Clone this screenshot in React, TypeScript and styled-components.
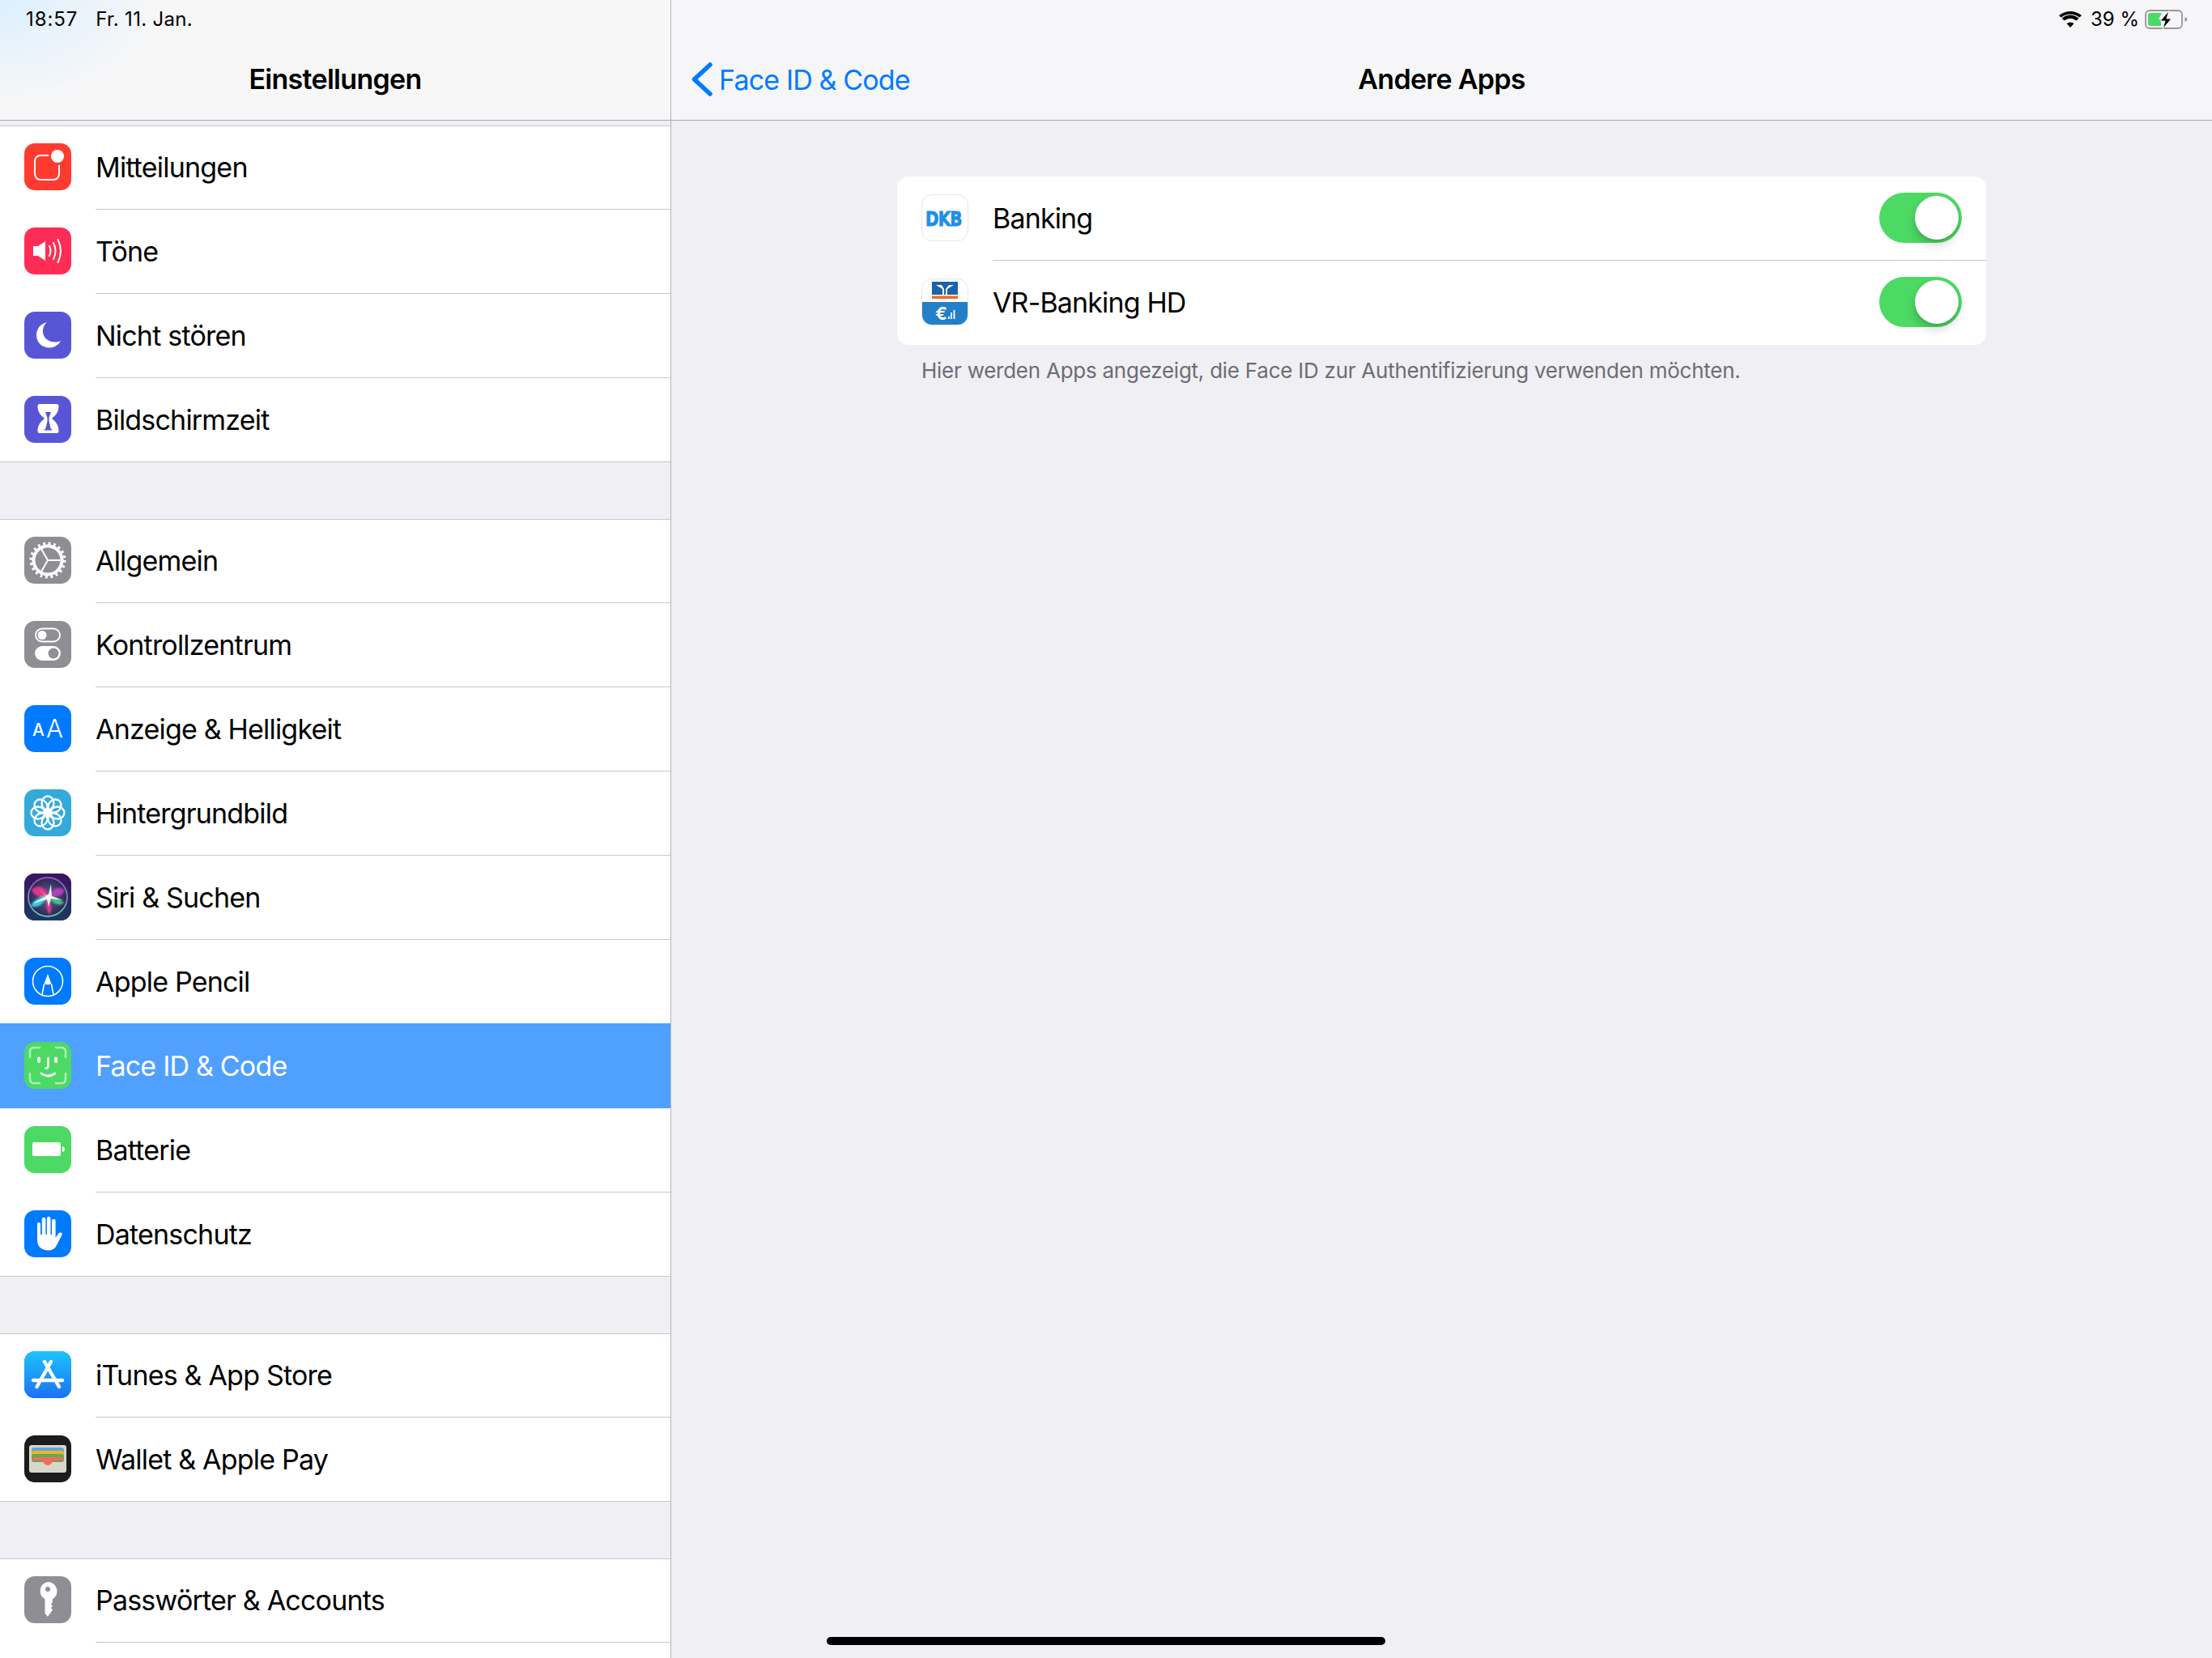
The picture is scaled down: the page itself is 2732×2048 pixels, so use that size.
import React from "react";
import styled, { createGlobalStyle } from "styled-components";

const GlobalStyle = createGlobalStyle`
  html, body { margin: 0; padding: 0; background: #efeff4; }
  body { font-family: Inter, "Liberation Sans", sans-serif; -webkit-font-smoothing: antialiased; }
  * { box-sizing: border-box; }
`;

const Screen = styled.div`
  position: relative;
  width: 2732px;
  height: 2048px;
  display: flex;
  overflow: hidden;
  background: #efeff4;
`;
const Sidebar = styled.aside`
  width: 829px;
  flex: none;
  height: 2048px;
  border-right: 1px solid #b4b4b8;
  overflow: hidden;
`;
const Detail = styled.main`
  flex: 1;
  min-width: 0;
  display: flex;
  flex-direction: column;
`;
const NavBar = styled.header<{ $glow?: boolean }>`
  position: relative;
  height: 149px;
  flex: none;
  border-bottom: 1px solid #a9a9ac;
  background: ${(p) =>
    p.$glow
      ? "radial-gradient(ellipse 200px 130px at 0 0, #dcefff 0%, rgba(247,247,248,0) 100%), #f7f7f8"
      : "#f6f6f8"};
`;
const StatusLeft = styled.div`
  position: absolute;
  left: 32px;
  top: 9px;
  display: flex;
  gap: 22px;
  font-size: 24px;
  line-height: 30px;
  letter-spacing: 0.3px;
  color: #000;
`;
const StatusTime = styled.span`
  letter-spacing: 0.9px;
`;
const NavTitle = styled.h1`
  margin: 0;
  position: absolute;
  left: 0;
  right: 0;
  top: 76px;
  text-align: center;
  font-size: 34px;
  line-height: 44px;
  font-weight: 600;
  letter-spacing: -0.7px;
  color: #000;
`;
const BackLink = styled.div`
  position: absolute;
  left: 25px;
  top: 77px;
  height: 42px;
  display: flex;
  align-items: center;
  gap: 8px;
  font-size: 34px;
  letter-spacing: -0.85px;
  color: #007aff;
`;
const StatusRight = styled.div`
  position: absolute;
  right: 30px;
  top: 9px;
  display: flex;
  align-items: center;
  gap: 7px;
  font-size: 24px;
  line-height: 30px;
`;
const WifiGlyph = styled.svg`
  margin-right: 4px;
`;
const SideList = styled.div`
  padding-top: 6px;
`;
const Group = styled.section`
  background: #fff;
  border-top: 1px solid #c8c7cc;
  margin-bottom: 70px;
`;
const Row = styled.div<{ $active?: boolean; $last?: boolean }>`
  height: ${(p) => (p.$active ? "105px" : "104px")};
  margin-top: ${(p) => (p.$active ? "-1px" : "0")};
  display: flex;
  align-items: center;
  padding: 0 0 ${(p) => (p.$active ? "1px" : "2px")} 30px;
  gap: 30px;
  position: relative;
  z-index: ${(p) => (p.$active ? 1 : 0)};
  background: ${(p) => (p.$active ? "#4fa0ff" : "transparent")};
  color: ${(p) => (p.$active ? "#fff" : "#000")};
  font-size: 34px;
  letter-spacing: -0.8px;
  &:first-child {
    height: 103px;
    padding-bottom: 3px;
  }
  &::after {
    content: "";
    display: ${(p) => (p.$active ? "none" : "block")};
    position: absolute;
    left: ${(p) => (p.$last ? "0" : "118px")};
    right: 0;
    bottom: 0;
    height: 1px;
    background: #c8c7cc;
  }
`;
const IconBox = styled.div<{ $bg: string }>`
  width: 58px;
  height: 58px;
  flex: none;
  border-radius: 13px;
  background: ${(p) => p.$bg};
  overflow: hidden;
  & > svg { display: block; width: 58px; height: 58px; }
`;
const Content = styled.div`
  width: 1345px;
  margin: 69px auto 0;
`;
const Card = styled.section`
  background: #fff;
  border-radius: 14px;
`;
const AppRow = styled.div<{ $last?: boolean }>`
  height: 104px;
  display: flex;
  align-items: center;
  padding: 0 30px 2px;
  gap: 30px;
  position: relative;
  font-size: 34px;
  letter-spacing: -0.85px;
  color: #000;
  &::after {
    content: "";
    display: ${(p) => (p.$last ? "none" : "block")};
    position: absolute;
    left: 118px;
    right: 0;
    bottom: 0;
    height: 1px;
    background: #c8c7cc;
  }
`;
const AppName = styled.span`
  flex: 1;
`;
const AppIcon = styled.div`
  width: 58px;
  height: 58px;
  flex: none;
  border-radius: 13px;
  border: 1px solid #e6e6e8;
  background: #fff;
  overflow: hidden;
  & > svg { display: block; width: 56px; height: 56px; }
`;
const Toggle = styled.div`
  width: 102px;
  height: 62px;
  border-radius: 31px;
  background: #4cd964;
  position: relative;
  flex: none;
  &::after {
    content: "";
    position: absolute;
    right: 4px;
    top: 4px;
    width: 54px;
    height: 54px;
    border-radius: 50%;
    background: #fff;
    box-shadow: -1px 7px 12px rgba(0, 0, 0, 0.16), 0 2px 3px rgba(0, 0, 0, 0.1);
  }
`;
const Footnote = styled.p`
  margin: 16px 0 0 30px;
  font-size: 26px;
  line-height: 32px;
  letter-spacing: -0.25px;
  color: #6d6d72;
`;
const HomeBar = styled.div`
  position: absolute;
  left: 1021px;
  bottom: 16px;
  width: 690px;
  height: 10px;
  border-radius: 5px;
  background: #000;
`;

const W = "#fff";
const icons: Record<string, React.ReactNode> = {
  bell: (
    <svg viewBox="0 0 58 58">
      <rect x="13" y="15" width="30" height="30" rx="7" fill="none" stroke={W} strokeWidth="2" />
      <circle cx="41" cy="16" r="11" fill="#ff3b30" />
      <circle cx="41" cy="16" r="8" fill={W} />
    </svg>
  ),
  sound: (
    <svg viewBox="0 0 58 58" fill="none" stroke={W} strokeWidth="2" strokeLinecap="round">
      <path d="M11 23h6l9-6v24l-9-6h-6z" fill={W} stroke="none" />
      <path d="M31 23q3 6 0 12" />
      <path d="M36 19q5 10 0 20" />
      <path d="M41.500 15q7 14 0 28" />
    </svg>
  ),
  moon: (
    <svg viewBox="0 0 58 58">
      <path d="M28 13C20 15 15 21 15 29c0 9 7 15.500 16 15.500 6 0 11-3 14-8.500-2 1-5 1.500-7 1.500-10 0-16-7-15-15 .5-4 2-7 5-9.500z" fill={W} />
    </svg>
  ),
  hourglass: (
    <svg viewBox="0 0 58 58">
      <path d="M19 10h21a2.500 2.500 0 0 1 2.500 2.500c0 7-3 11-8.500 15.500 5.500 4.500 8.500 8.500 8.500 15.500A2.500 2.500 0 0 1 40 46H19a2.500 2.500 0 0 1-2.500-2.500c0-7 3-11 8.500-15.500-5.500-4.500-8.500-8.500-8.500-15.500A2.500 2.500 0 0 1 19 10z" fill={W} />
      <path d="M26 20h7l-2.500 7v4l2 9 2.500 2.500H24l2.500-2.500 2-9v-4z" fill="#5856d6" />
    </svg>
  ),
  gear: (
    <svg viewBox="0 0 58 58" fill="none" stroke={W}>
      <circle cx="29" cy="29" r="17.500" strokeWidth="4" />
      <circle cx="29" cy="29" r="20.500" strokeWidth="4" strokeDasharray="2.800 3.640" />
      <path d="M29 29L21 15M29 29h16M29 29L21 43" strokeWidth="2" />
    </svg>
  ),
  control: (
    <svg viewBox="0 0 58 58">
      <rect x="14" y="9.500" width="30" height="16" rx="8" fill="none" stroke={W} strokeWidth="2" />
      <circle cx="22" cy="17.500" r="5.500" fill={W} />
      <rect x="13" y="31" width="32" height="18" rx="9" fill={W} />
      <circle cx="36" cy="40" r="6.500" fill="#8e8e93" />
    </svg>
  ),
  aa: (
    <svg viewBox="0 0 58 58" fill={W} fontFamily="Inter, sans-serif">
      <text x="10" y="37.500" fontSize="21" fontWeight="500">A</text>
      <text x="27" y="40" fontSize="31" fontWeight="300">A</text>
    </svg>
  ),
  flower: (
    <svg viewBox="0 0 58 58" fill="none" stroke={W} strokeWidth="2.300">
      {[0, 45, 90, 135, 180, 225, 270, 315].map((a) => (
        <ellipse key={a} cx="29" cy="17" rx="7.500" ry="8.500" transform={`rotate(${a} 29 29)`} />
      ))}
      <circle cx="29" cy="29" r="3.200" fill={W} stroke="none" />
    </svg>
  ),
  siri: (
    <svg viewBox="0 0 58 58">
      <defs>
        <linearGradient id="siriBg" x1="0" y1="0" x2="0" y2="1">
          <stop offset="0" stopColor="#3a1466" />
          <stop offset="1" stopColor="#1c3a5e" />
        </linearGradient>
        <linearGradient id="siriRing" x1="0" y1="0" x2="0" y2="1">
          <stop offset="0" stopColor="#a04bb0" />
          <stop offset="1" stopColor="#5fc7c0" />
        </linearGradient>
        <radialGradient id="siriDisc">
          <stop offset="0" stopColor="#6a5f98" />
          <stop offset="1" stopColor="#2a2750" />
        </radialGradient>
        <filter id="siriBlur" x="-20%" y="-20%" width="140%" height="140%">
          <feGaussianBlur stdDeviation="1" />
        </filter>
      </defs>
      <rect width="58" height="58" fill="url(#siriBg)" />
      <circle cx="29" cy="29" r="24" fill="url(#siriDisc)" stroke="url(#siriRing)" strokeWidth="1.800" />
      <g filter="url(#siriBlur)">
        <path d="M31 28C25 14 15 14 9 20c3 9 14 10 22 8z" fill="#e0358c" />
        <path d="M29 29c8-12 14-14 20-9 2 7-10 9-20 9z" fill="#c43fc4" opacity=".85" />
        <path d="M29 27C20 28 11 33 8 40c8 4 17-3 21-13z" fill="#3ad0de" />
        <path d="M29 28c8 1 15 4 20 8-5 6-16 0-20-8z" fill="#3fc886" />
        <path d="M29 29c-3 7-2 15 2 22 4-6 2-15-2-22z" fill="#e0408e" />
      </g>
      <path d="M29 29L33 13l1 15 14 5-15-2-3 10-2-9-18 5 17-9-9-9z" fill="#fff" opacity=".9" />
      <circle cx="30" cy="29" r="3" fill="#fff" />
    </svg>
  ),
  pencil: (
    <svg viewBox="0 0 58 58" fill="none">
      <circle cx="29" cy="29" r="18.500" stroke={W} strokeWidth="1.600" />
      <path d="M29 20l4.500 12.500q-4.500 1.500-9 0z" fill={W} />
      <path d="M24.500 32.500l-2.500 13M33.500 32.500l2.500 13" stroke={W} strokeWidth="1.600" />
    </svg>
  ),
  faceid: (
    <svg viewBox="0 0 58 58" fill="none" stroke={W} strokeWidth="2.600" strokeLinecap="round">
      <g opacity=".55">
        <path d="M7 19v-7a5 5 0 0 1 5-5h7M39 7h7a5 5 0 0 1 5 5v7M51 39v7a5 5 0 0 1-5 5h-7M19 51h-7a5 5 0 0 1-5-5v-7" />
      </g>
      <path d="M18 20.500v3.500M39 20.500v3.500" strokeWidth="4" />
      <path d="M29.500 20v9.500q0 3-3 3" />
      <path d="M21 39q8 6 17 0" strokeWidth="2.800" />
    </svg>
  ),
  battery: (
    <svg viewBox="0 0 58 58">
      <rect x="10" y="20" width="35" height="17" rx="2" fill={W} />
      <path d="M47 25q3 1 3 3.500t-3 3.500z" fill={W} />
    </svg>
  ),
  hand: (
    <svg viewBox="0 0 58 58">
      <path d="M16 17a2 2 0 0 1 4 0v13h1.800V11a2.300 2.300 0 0 1 4.600 0v19h1.500V10a2.300 2.300 0 0 1 4.600 0v20h1.500V13a2.300 2.300 0 0 1 4.600 0v21l3.400-5c1.800-2.500 5.800-1.500 4.500 1.500l-6.500 12.500c-2 4-5 6.500-10 6.500-9 0-14-5-14-13z" fill={W} />
    </svg>
  ),
  appstore: (
    <svg viewBox="0 0 58 58">
      <defs>
        <linearGradient id="asBg" x1="0" y1="0" x2="0" y2="1">
          <stop offset="0" stopColor="#1cc4fd" />
          <stop offset="1" stopColor="#1d70f2" />
        </linearGradient>
      </defs>
      <rect width="58" height="58" fill="url(#asBg)" />
      <g stroke={W} strokeWidth="4.400" strokeLinecap="round" fill="none">
        <path d="M33 13L15.500 44M25 13l18 31" />
        <path d="M11 36h36" />
      </g>
    </svg>
  ),
  wallet: (
    <svg viewBox="0 0 58 58">
      <rect x="6" y="12" width="46" height="34" rx="3" fill="#d9d7cc" />
      <rect x="9" y="15" width="40" height="12" rx="3" fill="#5aa9d6" />
      <rect x="9" y="19" width="40" height="10" rx="3" fill="#f4b02c" />
      <rect x="9" y="23" width="40" height="10" rx="3" fill="#57b04a" />
      <path d="M9 30a3 3 0 0 1 3-3h34a3 3 0 0 1 3 3v1H37l-5 5q-3 2-6 0l-5-5H9z" fill="#f26c5d" />
    </svg>
  ),
  key: (
    <svg viewBox="0 0 58 58">
      <path fillRule="evenodd" d="M29 7a11.500 11.500 0 0 1 6 21.300V32l-2 2.500 2 2.500-2 2 2 2.500L29 50l-3.500-4V28.300A11.500 11.500 0 0 1 29 7zm0 6a3 3 0 1 0 0 6 3 3 0 0 0 0-6z" fill={W} />
    </svg>
  ),
};

type Item = { label: string; icon: string; bg: string; active?: boolean };
const groups: Item[][] = [
  [
    { label: "Mitteilungen", icon: "bell", bg: "#ff3b30" },
    { label: "Töne", icon: "sound", bg: "#ff2d55" },
    { label: "Nicht stören", icon: "moon", bg: "#5856d6" },
    { label: "Bildschirmzeit", icon: "hourglass", bg: "#5856d6" },
  ],
  [
    { label: "Allgemein", icon: "gear", bg: "#8e8e93" },
    { label: "Kontrollzentrum", icon: "control", bg: "#8e8e93" },
    { label: "Anzeige & Helligkeit", icon: "aa", bg: "#007aff" },
    { label: "Hintergrundbild", icon: "flower", bg: "#34aadc" },
    { label: "Siri & Suchen", icon: "siri", bg: "#1d1d3a" },
    { label: "Apple Pencil", icon: "pencil", bg: "#007aff" },
    { label: "Face ID & Code", icon: "faceid", bg: "#4cd964", active: true },
    { label: "Batterie", icon: "battery", bg: "#4cd964" },
    { label: "Datenschutz", icon: "hand", bg: "#007aff" },
  ],
  [
    { label: "iTunes & App Store", icon: "appstore", bg: "#1c9cf8" },
    { label: "Wallet & Apple Pay", icon: "wallet", bg: "#1c1c1e" },
  ],
  [
    { label: "Passwörter & Accounts", icon: "key", bg: "#8e8e93" },
    { label: "", icon: "", bg: "transparent" },
  ],
];

export default function App() {
  return (
    <Screen>
      <GlobalStyle />
      <Sidebar>
        <NavBar $glow>
          <StatusLeft>
            <StatusTime>18:57</StatusTime>
            <span>Fr. 11. Jan.</span>
          </StatusLeft>
          <NavTitle>Einstellungen</NavTitle>
        </NavBar>
        <SideList>
          {groups.map((g, i) => (
            <Group key={i}>
              {g.map((it, j) => (
                <Row key={j} $active={it.active} $last={j === g.length - 1}>
                  {it.icon && <IconBox $bg={it.bg}>{icons[it.icon]}</IconBox>}
                  {it.label && <span>{it.label}</span>}
                </Row>
              ))}
            </Group>
          ))}
        </SideList>
      </Sidebar>
      <Detail>
        <NavBar>
          <BackLink>
            <svg width="26" height="42" viewBox="0 0 26 42" fill="none">
              <path d="M23 3L3.500 21 23 39" stroke="#007aff" strokeWidth="5.500" strokeLinecap="round" strokeLinejoin="round" />
            </svg>
            <span>Face ID &amp; Code</span>
          </BackLink>
          <NavTitle>Andere Apps</NavTitle>
          <StatusRight>
            <WifiGlyph width="28" height="20" viewBox="0 0 28 20">
              <path d="M14 20l-4.500-5q4.500-3 9 0zM6.500 11.500L3.500 8.500q10.500-8 21 0l-3 3q-7.500-5.500-15 0zM2.500 7.500L0 5q14-10 28 0l-2.500 2.500q-11.500-8-23 0z" fill="#000" />
            </WifiGlyph>
            <span>39 %</span>
            <svg width="53" height="24" viewBox="0 0 53 24">
              <rect x="1" y="1" width="45" height="22" rx="5" fill="none" stroke="#969696" strokeWidth="1.800" />
              <path d="M4 7a3 3 0 0 1 3-3h14l-4 8h3v8H7a3 3 0 0 1-3-3z" fill="#4cd964" />
              <path d="M30 1L19 14h6l-3 10 11-13h-6z" fill="#000" stroke="#f6f6f8" strokeWidth="1" />
              <path d="M49.500 9q3 1 3 3t-3 3z" fill="#969696" />
            </svg>
          </StatusRight>
        </NavBar>
        <Content>
          <Card>
            <AppRow>
              <AppIcon>
                <svg viewBox="0 0 56 56">
                  <g transform="scale(1 1.25)">
                    <text x="4" y="30.400" fontFamily="'DejaVu Sans', sans-serif" fontWeight="700" fontSize="20" fill="#1e8fe8" stroke="#1e8fe8" strokeWidth="0.700">DKB</text>
                  </g>
                </svg>
              </AppIcon>
              <AppName>Banking</AppName>
              <Toggle />
            </AppRow>
            <AppRow $last>
              <AppIcon>
                <svg viewBox="0 0 56 56">
                  <rect x="0" y="28" width="56" height="28" fill="#2280c8" />
                  <rect x="12" y="3" width="32" height="16" fill="#1b63ad" />
                  <rect x="12" y="20.500" width="32" height="3.500" fill="#f0691e" />
                  <path d="M17 7h22l-8 5v7h-6v-7z" fill="#fff" />
                  <path d="M24 7h9l-4 5v7h-2v-7z" fill="#1b63ad" />
                  <text x="23" y="50" textAnchor="middle" fontFamily="Inter, sans-serif" fontWeight="700" fontSize="22" fill="#fff">€</text>
                  <path d="M33 49v-3M36 49v-8M39.500 49v-11" stroke="#fff" strokeWidth="1.800" />
                </svg>
              </AppIcon>
              <AppName>VR-Banking HD</AppName>
              <Toggle />
            </AppRow>
          </Card>
          <Footnote>Hier werden Apps angezeigt, die Face ID zur Authentifizierung verwenden möchten.</Footnote>
        </Content>
      </Detail>
      <HomeBar />
    </Screen>
  );
}
